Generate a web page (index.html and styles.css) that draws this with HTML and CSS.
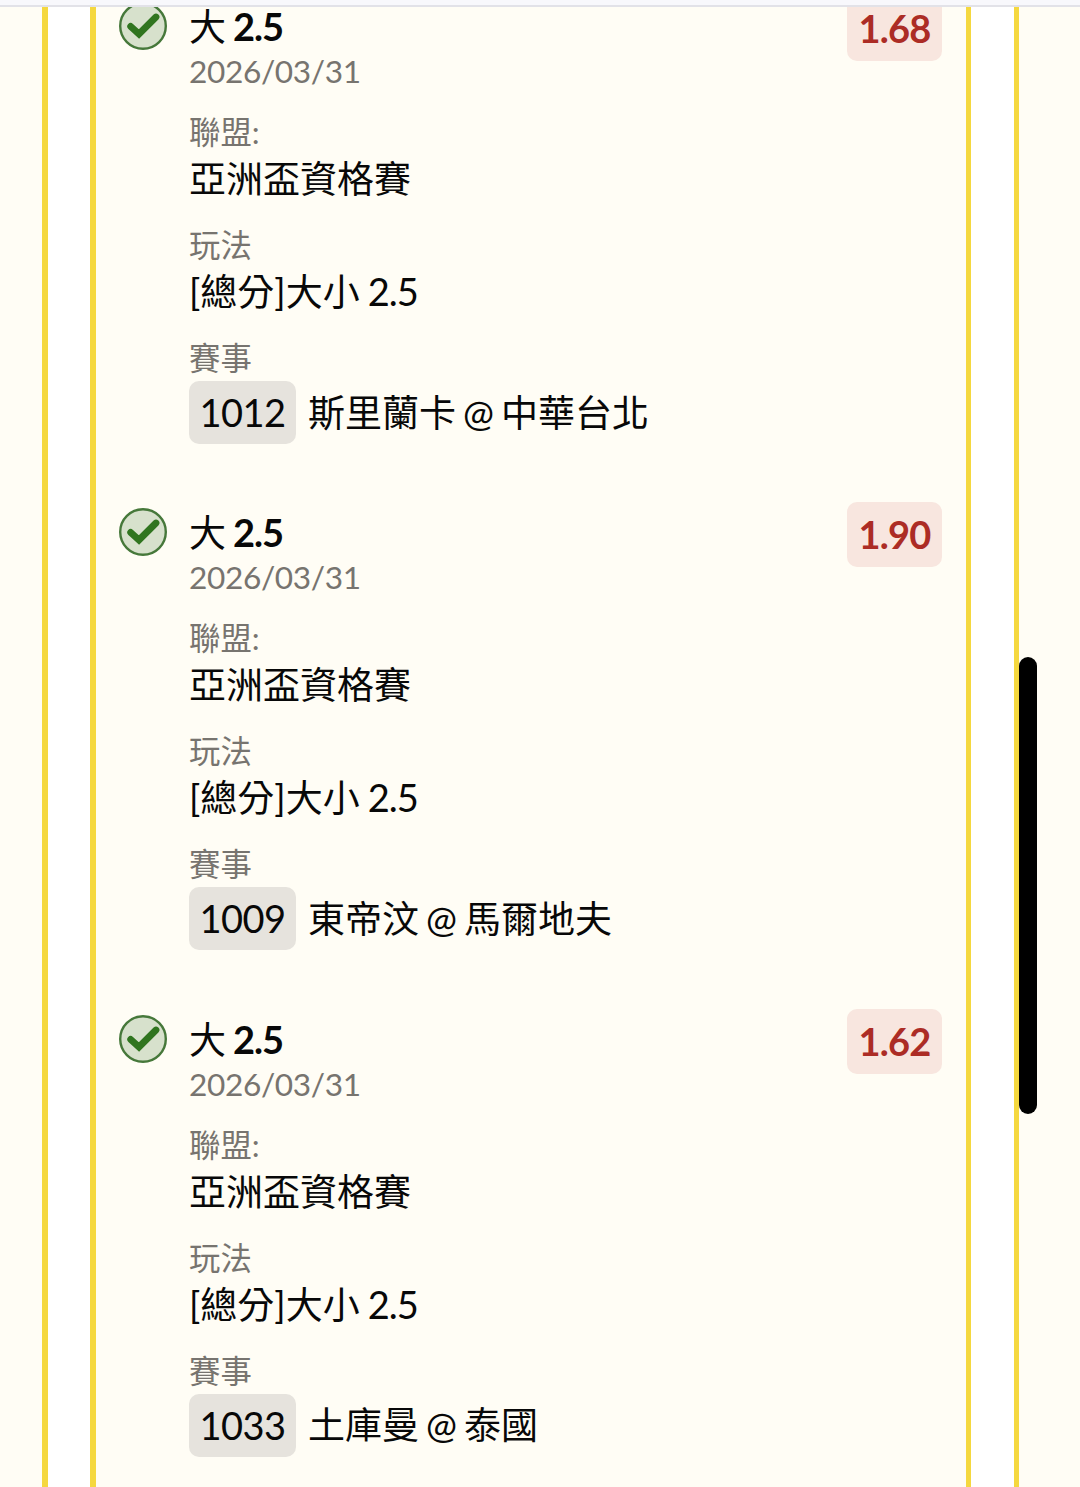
FILE: index.html
```html
<!DOCTYPE html>
<html lang="zh-Hant">
<head>
<meta charset="utf-8">
<meta name="viewport" content="width=device-width, initial-scale=1">
<title>投注明細</title>
<link rel="stylesheet" href="styles.css">
</head>
<body>
<svg width="0" height="0" class="sprite" aria-hidden="true">
  <symbol id="won" viewBox="0 0 48 48">
    <circle cx="24" cy="24" r="22.8" fill="#d7e1cc" stroke="#46783a" stroke-width="2.4"/>
    <path d="M11.7 24.4 20 32 37 15" fill="none" stroke="#30751f" stroke-width="6.8" stroke-linecap="round"/>
  </symbol>
</svg>
<div class="topbar"></div>
<main class="page">
  <section class="outer">
    <div class="inner">
      <div class="bets">
        <article class="bet">
          <svg class="status"><use href="#won"/></svg>
          <div class="info">
            <h2 class="pick">大<b>2.5</b></h2>
            <div class="date">2026/03/31</div>
            <dl class="details">
              <div><dt>聯盟:</dt><dd>亞洲盃資格賽</dd></div>
              <div><dt>玩法</dt><dd>[總分]大小<span class="line">2.5</span></dd></div>
              <div><dt>賽事</dt><dd class="match"><span class="code">1012</span><span>斯里蘭卡</span><span class="at">@</span><span>中華台北</span></dd></div>
            </dl>
          </div>
          <div class="odds">1.68</div>
        </article>
        <article class="bet">
          <svg class="status"><use href="#won"/></svg>
          <div class="info">
            <h2 class="pick">大<b>2.5</b></h2>
            <div class="date">2026/03/31</div>
            <dl class="details">
              <div><dt>聯盟:</dt><dd>亞洲盃資格賽</dd></div>
              <div><dt>玩法</dt><dd>[總分]大小<span class="line">2.5</span></dd></div>
              <div><dt>賽事</dt><dd class="match"><span class="code">1009</span><span>東帝汶</span><span class="at">@</span><span>馬爾地夫</span></dd></div>
            </dl>
          </div>
          <div class="odds">1.90</div>
        </article>
        <article class="bet">
          <svg class="status"><use href="#won"/></svg>
          <div class="info">
            <h2 class="pick">大<b>2.5</b></h2>
            <div class="date">2026/03/31</div>
            <dl class="details">
              <div><dt>聯盟:</dt><dd>亞洲盃資格賽</dd></div>
              <div><dt>玩法</dt><dd>[總分]大小<span class="line">2.5</span></dd></div>
              <div><dt>賽事</dt><dd class="match"><span class="code">1033</span><span>土庫曼</span><span class="at">@</span><span>泰國</span></dd></div>
            </dl>
          </div>
          <div class="odds">1.62</div>
        </article>
      </div>
    </div>
  </section>
  <div class="scrollbar"></div>
</main>
</body>
</html>
```
FILE: styles.css
```css
* { box-sizing: border-box; }
body {
  margin: 0;
  height: 1487px;
  overflow: hidden;
  display: flex;
  flex-direction: column;
  background: #fffdf5;
  color: #080808;
  font: 37px/48px Lato, "Noto Sans CJK TC", sans-serif;
}
.sprite { position: absolute; }
.topbar {
  flex: none;
  height: 7px;
  background: #f8f8fc;
  border-bottom: 2px solid #e2e2e8;
}
.page {
  position: relative;
  flex: 1;
  min-height: 0;
  overflow: hidden;
  padding: 0 61px 0 42px;
}
.outer {
  height: 100%;
  padding: 0 43px 0 42px;
  background: #fff;
  border: solid #f5d83f;
  border-width: 0 5px 0 6px;
}
.inner {
  display: flow-root;
  height: 100%;
  padding: 0 24px 0 23px;
  background: #fffdf5;
  border: solid #f5d83f;
  border-width: 0 5px 0 6px;
}
.bets { margin-top: -12px; padding-top: 1px; }
.bet {
  display: flex;
  align-items: flex-start;
  height: 506.25px;
}
.status {
  flex: none;
  width: 48px;
  height: 48px;
  margin: 6px 22px 0 0;
}
.info { flex: 1; padding-top: 4px; }
.pick {
  height: 54px;
  margin: 0;
  font-size: 37px;
  font-weight: 400;
  line-height: 54px;
}
.pick b {
  margin-left: 7px;
  font-size: 38px;
  font-weight: 700;
  letter-spacing: -1px;
  line-height: 1;
}
.date {
  height: 36px;
  margin-bottom: 19px;
  color: #77746f;
  font-size: 31.6px;
  letter-spacing: -0.35px;
  line-height: 35px;
}
.details {
  display: grid;
  gap: 19px;
  margin: 0;
}
dt {
  height: 46px;
  color: #77746f;
  font-size: 31.4px;
  line-height: 46px;
}
dd { margin: 0; height: 48px; }
.line { margin-left: 8px; font-size: 38px; letter-spacing: -1px; line-height: 1; }
.match {
  display: flex;
  align-items: center;
  height: 63px;
}
.code {
  width: 107px;
  height: 63px;
  margin-right: 12px;
  border-radius: 10px;
  background: #e6e3dd;
  font-size: 38px;
  letter-spacing: -0.6px;
  line-height: 63px;
  text-align: center;
}
.at { margin: 0 8px 0 7px; }
.at + span { margin-left: -1px; }
.odds {
  width: 95px;
  height: 65px;
  border-radius: 10px;
  background: #f8e6df;
  color: #ac2c25;
  font-size: 38px;
  font-weight: 700;
  letter-spacing: -0.8px;
  line-height: 64px;
  text-align: center;
}
.scrollbar {
  position: absolute;
  top: 650px;
  right: 43px;
  width: 18px;
  height: 457px;
  border-radius: 9px;
  background: #000;
}
```
